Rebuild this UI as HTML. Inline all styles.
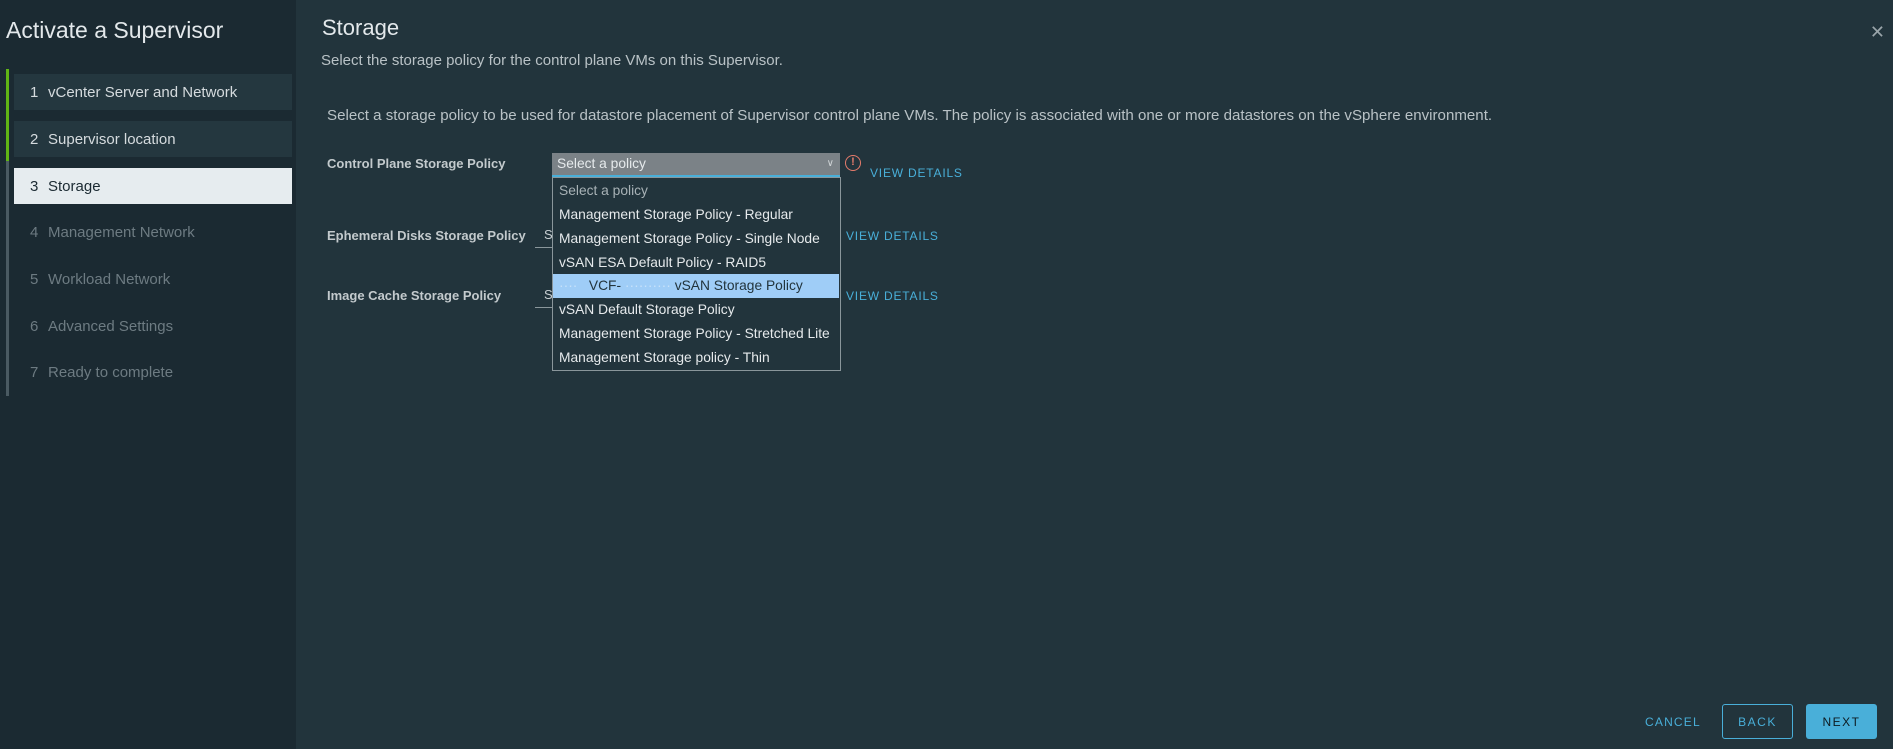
<!DOCTYPE html>
<html><head><style>
*{margin:0;padding:0;box-sizing:border-box}
body{width:1893px;height:749px;overflow:hidden;background:#22343c;font-family:"Liberation Sans",sans-serif;position:relative;color:#c9d0d4}
.side{position:absolute;left:0;top:0;width:296px;height:749px;background:#1b2a32}
.title{position:absolute;left:6px;top:17px;font-size:23px;color:#e3e8eb}
.bar{position:absolute;left:6px;width:3px}
.step{position:absolute;left:14px;width:278px;height:36px;font-size:15px;line-height:37px;padding-left:16px;color:#d5dbde}
.step b{font-weight:normal;display:inline-block;width:18px}
.abs{position:absolute;white-space:nowrap}
.lbl{font-size:13px;font-weight:bold;color:#c3cacd}
.vd{font-size:12px;color:#49afd9;letter-spacing:0.8px}
.opt{position:absolute;left:0;width:286px;height:24px;line-height:24px;padding-left:6px;font-size:13.8px;color:#e6eaec}
</style></head><body>
<div class="side"></div>
<div class="title">Activate a Supervisor</div>
<div class="bar" style="top:69px;height:327px;background:#4a5a62"></div>
<div class="bar" style="top:69px;height:92px;background:#60b515"></div>
<div class="step" style="top:74px;background:#24373f"><b>1</b>vCenter Server and Network</div>
<div class="step" style="top:121px;background:#24373f"><b>2</b>Supervisor location</div>
<div class="step" style="top:168px;background:#e6ecef;color:#1b2a32"><b>3</b>Storage</div>
<div class="step" style="top:214px;color:#6d7b82"><b>4</b>Management Network</div>
<div class="step" style="top:261px;color:#6d7b82"><b>5</b>Workload Network</div>
<div class="step" style="top:308px;color:#6d7b82"><b>6</b>Advanced Settings</div>
<div class="step" style="top:354px;color:#6d7b82"><b>7</b>Ready to complete</div>

<div class="abs" style="left:322px;top:15px;font-size:22px;color:#e3e8eb">Storage</div>
<div class="abs" style="left:321px;top:52px;font-size:15px;color:#b9c2c6">Select the storage policy for the control plane VMs on this Supervisor.</div>
<div class="abs" style="left:327px;top:107px;font-size:15.1px;color:#b9c2c6">Select a storage policy to be used for datastore placement of Supervisor control plane VMs. The policy is associated with one or more datastores on the vSphere environment.</div>
<div class="abs" style="right:8px;top:22px;font-size:18px;color:#9aa5aa">✕</div>

<div class="abs lbl" style="left:327px;top:156px">Control Plane Storage Policy</div>
<div class="abs lbl" style="left:327px;top:228px">Ephemeral Disks Storage Policy</div>
<div class="abs lbl" style="left:327px;top:288px">Image Cache Storage Policy</div>
<div class="abs" style="left:544px;top:227px;font-size:13px">S</div>
<div class="abs" style="left:544px;top:287px;font-size:13px">S</div>
<div class="abs" style="left:535px;top:247px;width:18px;height:1px;background:#8a969b"></div>
<div class="abs" style="left:535px;top:307px;width:18px;height:1px;background:#8a969b"></div>

<div class="abs" style="left:552px;top:153px;width:288px;height:24px;background:#7b8287;border-bottom:2px solid #49afd9;font-size:13.8px;line-height:22px;padding-left:5px;color:#e6eaec">Select a policy<span style="position:absolute;right:6px;top:0;font-size:10px;color:#cfd4d6">&#8744;</span></div>
<div class="abs" style="left:552px;top:177px;width:289px;height:194px;background:#22343c;border:1px solid #8a969b">
<div class="opt" style="top:1px;color:#a8b2b6">Select a policy</div>
<div class="opt" style="top:25px">Management Storage Policy - Regular</div>
<div class="opt" style="top:49px">Management Storage Policy - Single Node</div>
<div class="opt" style="top:73px">vSAN ESA Default Policy - RAID5</div>
<div class="opt" style="top:96px;background:#9fcdf7;color:#22343c"><span style="color:#c8e2fa">···· </span> &nbsp; VCF- <span style="color:#c8e2fa">··········</span> vSAN Storage Policy</div>
<div class="opt" style="top:120px">vSAN Default Storage Policy</div>
<div class="opt" style="top:144px">Management Storage Policy - Stretched Lite</div>
<div class="opt" style="top:168px">Management Storage policy - Thin</div>
</div>
<div class="abs" style="left:845px;top:155px;width:16px;height:16px;border:1.5px solid #e57b6b;border-radius:50%;color:#e57b6b;font-size:11px;font-weight:bold;text-align:center;line-height:13px">!</div>
<div class="abs vd" style="left:870px;top:166px">VIEW DETAILS</div>
<div class="abs vd" style="left:846px;top:229px">VIEW DETAILS</div>
<div class="abs vd" style="left:846px;top:289px">VIEW DETAILS</div>

<div class="abs vd" style="left:1645px;top:715px;letter-spacing:1.2px">CANCEL</div>
<div class="abs" style="left:1722px;top:704px;width:71px;height:35px;border:1px solid #49afd9;border-radius:3px;color:#49afd9;font-size:12px;letter-spacing:1.5px;text-align:center;line-height:35px">BACK</div>
<div class="abs" style="left:1806px;top:704px;width:71px;height:35px;background:#49afd9;border-radius:3px;color:#0d1a20;font-size:12px;letter-spacing:1.5px;text-align:center;line-height:36px">NEXT</div>
</body></html>
